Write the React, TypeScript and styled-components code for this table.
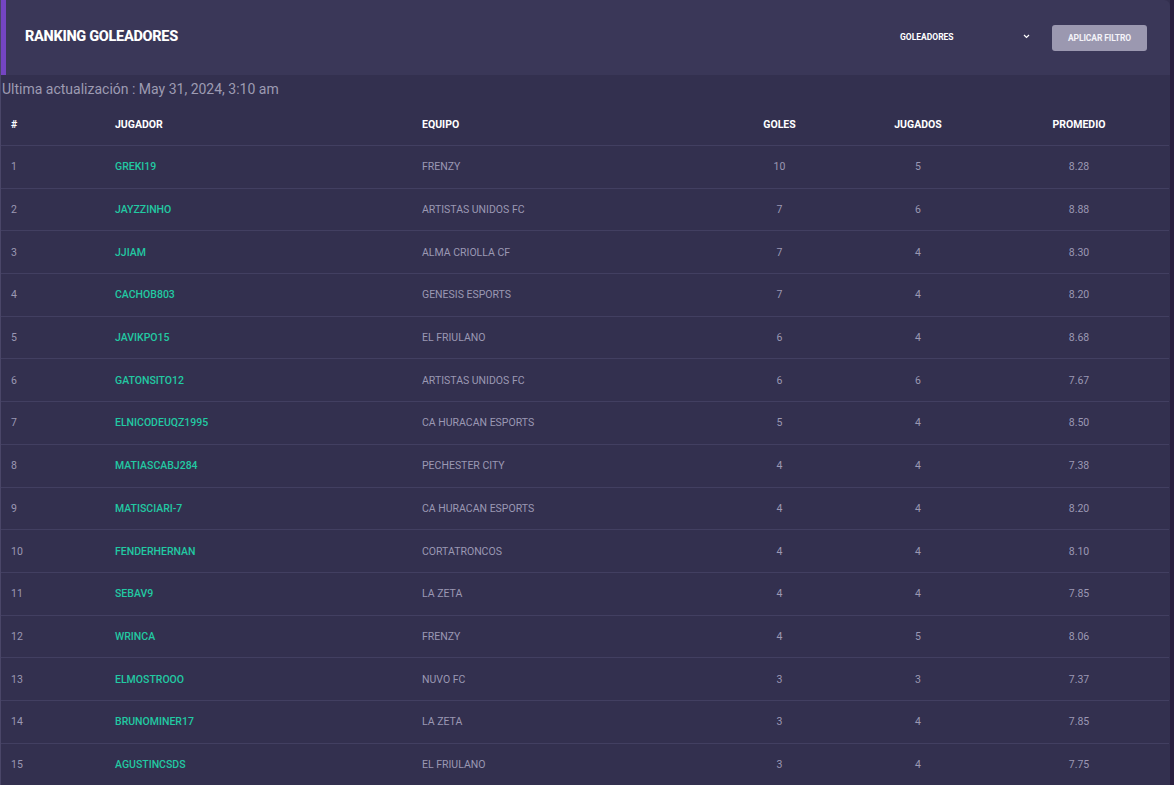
import React from "react";
import styled, { createGlobalStyle } from "styled-components";

const Global = createGlobalStyle`
  html, body { margin: 0; padding: 0; background: #2a1f3f; }
  body { font-family: Roboto, "Noto Sans", sans-serif; }
  * { box-sizing: border-box; }
`;

const Page = styled.div`
  width: 1170px;
  min-height: 785px;
  background: #33304f;
  border-left: 1px solid #4a4668;
  display: flex;
  flex-direction: column;
`;

const Header = styled.header`
  height: 75px;
  background: #3a3758;
  border-left: 5px solid #7445c2;
  border-top-right-radius: 6px;
  display: flex;
  align-items: center;
  padding: 0 23px 0 19px;
`;

const Title = styled.h1`
  margin: 0 0 3px;
  flex: 1;
  font-size: 14.5px;
  font-weight: 800;
  letter-spacing: -0.3px;
  color: #ffffff;
`;

const Select = styled.div`
  width: 130px;
  display: flex;
  align-items: center;
  justify-content: space-between;
  font-size: 8.5px;
  font-weight: 700;
  color: #ffffff;
  margin: 0 22px 2px 0;
`;

const Chevron = styled.svg`
  width: 7px;
  height: 5px;
`;

const Button = styled.button`
  width: 95px;
  height: 26px;
  border: none;
  border-radius: 3px;
  background: #9b98b0;
  color: #f4f3f8;
  font-family: Roboto, sans-serif;
  font-size: 8.5px;
  font-weight: 700;
  letter-spacing: -0.1px;
`;

const Updated = styled.div`
  padding: 6px 0 0 1px;
  height: 28px;
  font-size: 14px;
  color: #9d9bb2;
`;

const Table = styled.div`
  display: flex;
  flex-direction: column;
  width: 1168px;
`;

const Row = styled.div<{ $head?: boolean }>`
  display: grid;
  grid-template-columns: 104px 307px 300px 135px 142px 180px;
  height: ${(p) => (p.$head ? "43px" : "42.7px")};
  align-items: center;
  border-bottom: 1px solid #423f61;
  font-size: 10.5px;
  font-weight: ${(p) => (p.$head ? 700 : 400)};
  color: ${(p) => (p.$head ? "#ffffff" : "#9b98b3")};
`;

const Cell = styled.div<{ $center?: boolean; $name?: boolean }>`
  padding-left: ${(p) => (p.$center ? "0" : "10px")};
  text-align: ${(p) => (p.$center ? "center" : "left")};
  white-space: nowrap;
  color: ${(p) => (p.$name ? "#22c9a2" : "inherit")};
  font-weight: ${(p) => (p.$name ? 500 : "inherit")};
`;

const data: [string, string, number, number, string][] = [
  ["GREKI19", "FRENZY", 10, 5, "8.28"],
  ["JAYZZINHO", "ARTISTAS UNIDOS FC", 7, 6, "8.88"],
  ["JJIAM", "ALMA CRIOLLA CF", 7, 4, "8.30"],
  ["CACHOB803", "GENESIS ESPORTS", 7, 4, "8.20"],
  ["JAVIKPO15", "EL FRIULANO", 6, 4, "8.68"],
  ["GATONSITO12", "ARTISTAS UNIDOS FC", 6, 6, "7.67"],
  ["ELNICODEUQZ1995", "CA HURACAN ESPORTS", 5, 4, "8.50"],
  ["MATIASCABJ284", "PECHESTER CITY", 4, 4, "7.38"],
  ["MATISCIARI-7", "CA HURACAN ESPORTS", 4, 4, "8.20"],
  ["FENDERHERNAN", "CORTATRONCOS", 4, 4, "8.10"],
  ["SEBAV9", "LA ZETA", 4, 4, "7.85"],
  ["WRINCA", "FRENZY", 4, 5, "8.06"],
  ["ELMOSTROOO", "NUVO FC", 3, 3, "7.37"],
  ["BRUNOMINER17", "LA ZETA", 3, 4, "7.85"],
  ["AGUSTINCSDS", "EL FRIULANO", 3, 4, "7.75"],
];

export default function App() {
  return (
    <Page>
      <Global />
      <Header>
        <Title>RANKING GOLEADORES</Title>
        <Select>
          <span>GOLEADORES</span>
          <Chevron viewBox="0 0 7 5">
            <path d="M1 1 L3.5 3.5 L6 1" stroke="#ffffff" strokeWidth="1.2" fill="none" />
          </Chevron>
        </Select>
        <Button>APLICAR FILTRO</Button>
      </Header>
      <Updated>Ultima actualización : May 31, 2024, 3:10 am</Updated>
      <Table>
        <Row $head>
          <Cell>#</Cell>
          <Cell>JUGADOR</Cell>
          <Cell>EQUIPO</Cell>
          <Cell $center>GOLES</Cell>
          <Cell $center>JUGADOS</Cell>
          <Cell $center>PROMEDIO</Cell>
        </Row>
        {data.map((d, i) => (
          <Row key={i}>
            <Cell>{i + 1}</Cell>
            <Cell $name>{d[0]}</Cell>
            <Cell>{d[1]}</Cell>
            <Cell $center>{d[2]}</Cell>
            <Cell $center>{d[3]}</Cell>
            <Cell $center>{d[4]}</Cell>
          </Row>
        ))}
      </Table>
    </Page>
  );
}
